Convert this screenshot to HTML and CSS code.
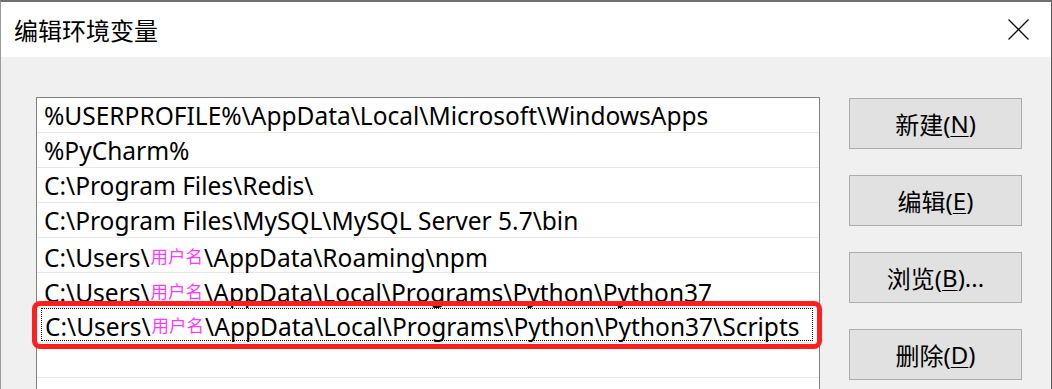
FILE: index.html
```html
<!DOCTYPE html>
<html lang="zh-CN">
<head>
<meta charset="utf-8">
<title>编辑环境变量</title>
<link rel="stylesheet" href="styles.css">
</head>
<body>
<div class="window">
  <div class="titlebar">
    <div class="title">编辑环境变量</div>
    <svg class="close" width="21" height="21" viewBox="0 0 21 21"><path d="M0.5 0.5 L20.5 20.5 M20.5 0.5 L0.5 20.5" stroke="#111" stroke-width="1.3" fill="none"/></svg>
  </div>
  <div class="content">
    <div class="listbox">
      <div class="row">%USERPROFILE%\AppData\Local\Microsoft\WindowsApps</div>
      <div class="row">%PyCharm%</div>
      <div class="row">C:\Program Files\Redis\</div>
      <div class="row">C:\Program Files\MySQL\MySQL Server 5.7\bin</div>
      <div class="row">C:\Users\<span class="user">用户名</span>\AppData\Roaming\npm</div>
      <div class="row">C:\Users\<span class="user">用户名</span>\AppData\Local\Programs\Python\Python37</div>
      <div class="row row-edit"><div class="editbox">C:\Users\<span class="user">用户名</span>\AppData\Local\Programs\Python\Python37\Scripts</div><div class="mark"></div></div>
      <div class="row"></div>
      <div class="row"></div>
    </div>
    <div class="buttons">
      <div class="btn">新建(<u>N</u>)</div>
      <div class="btn">编辑(<u>E</u>)</div>
      <div class="btn">浏览(<u>B</u>)...</div>
      <div class="btn">删除(<u>D</u>)</div>
    </div>
  </div>
</div>
</body>
</html>
```
FILE: styles.css
```css
html, body {
  margin: 0;
  padding: 0;
  background: #f0f0f0;
}
.window {
  width: 1052px;
  height: 389px;
  box-sizing: border-box;
  border-top: 2px solid #6f6f6f;
  border-left: 1px solid #9a9a9a;
  border-right: 1px solid #5a5a5a;
  overflow: hidden;
  font-family: "Noto Sans", "Noto Sans CJK SC", sans-serif;
  color: #000;
}
.titlebar {
  height: 55px;
  background: #fff;
  display: flex;
  align-items: center;
  justify-content: space-between;
  padding: 0 22px 0 13px;
}
.title {
  font-family: "Noto Sans CJK SC", sans-serif;
  font-size: 24px;
  line-height: 1;
}
.close {
  display: block;
  margin-top: -1px;
}
.content {
  display: flex;
  align-items: flex-start;
  padding: 40px 0 0 35px;
  background: #f0f0f0;
  gap: 29px;
}
.listbox {
  width: 782px;
  height: 320px;
  background: #fff;
  border: 1px solid #828282;
  position: relative;
}
.row {
  height: 34px;
  border-bottom: 1px solid #e6e6e6;
  box-sizing: content-box;
  padding-left: 7px;
  font-size: 24.5px;
  line-height: 35px;
  white-space: nowrap;
  position: relative;
}
.user {
  font-family: "Noto Sans CJK SC", sans-serif;
  font-size: 17.5px;
  color: #fb3cfb;
  vertical-align: 4px;
  margin: 0 1px 0 1px;
}
.row-edit {
  padding-left: 4px;
}
.editbox {
  display: inline-block;
  box-sizing: border-box;
  width: 772px;
  height: 33px;
  border: 1px dotted #000;
  padding-left: 3px;
  line-height: 31px;
}
.mark {
  position: absolute;
  left: -5px;
  top: -7px;
  width: 780px;
  height: 38px;
  border: 5px solid #ff1f1f;
  border-radius: 8px;
}
.buttons {
  display: flex;
  flex-direction: column;
  gap: 26px;
  padding-top: 1px;
}
.btn {
  width: 171px;
  height: 49px;
  background: #e1e1e1;
  border: 1px solid #adadad;
  display: flex;
  align-items: center;
  justify-content: center;
  font-family: "Noto Sans", "Noto Sans CJK SC", sans-serif;
  font-size: 24px;
}
.btn u {
  text-decoration-thickness: 1px;
  text-underline-offset: 3px;
}
```
